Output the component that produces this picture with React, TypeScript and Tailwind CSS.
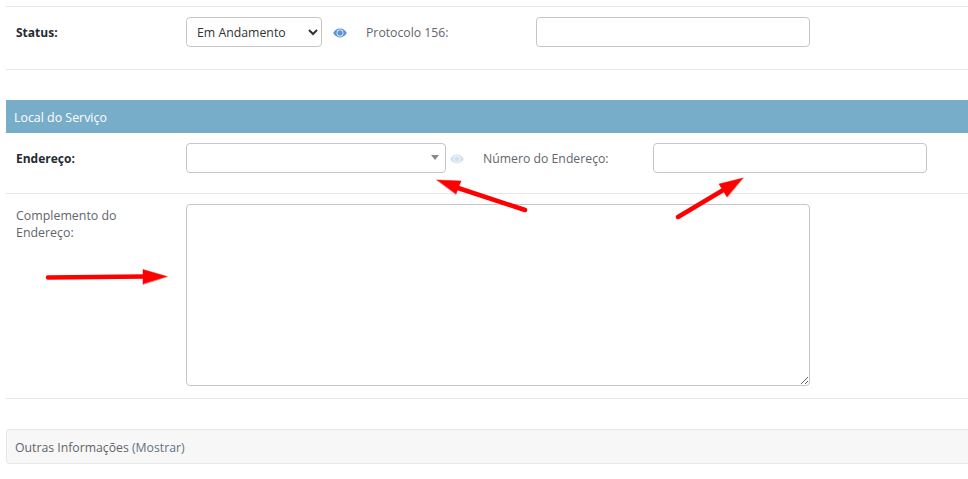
function Eye({ className }: { className: string }) {
  return (
    <svg viewBox="0 0 14 10" width="14" height="10" className={className}>
      <path fill="currentColor" fillRule="evenodd" d="M7 0.6C3.9 0.6 1.4 2.6 0.2 5c1.2 2.4 3.7 4.4 6.8 4.4s5.6-2 6.8-4.4C12.6 2.6 10.1 0.6 7 0.6zM7 1.6a3.4 3.4 0 1 1 0 6.8 3.4 3.4 0 0 1 0-6.8z" />
      <circle cx="7" cy="5" r="2.7" fill="currentColor" />
    </svg>
  );
}

function Arrows() {
  return (
    <svg className="absolute left-0 top-0 pointer-events-none" width="968" height="479" viewBox="0 0 968 479">
      <g fill="#ff0000" stroke="#ff0000" strokeLinecap="round">
        <line x1="525" y1="210" x2="455" y2="187" strokeWidth="4.5" />
        <polygon points="437,180 461,181 456,194" strokeWidth="0.5" />
        <line x1="678" y1="217" x2="725" y2="189" strokeWidth="4.5" />
        <polygon points="743,178 719,184 727,197" strokeWidth="0.5" />
        <line x1="48" y1="277.5" x2="145" y2="276.5" strokeWidth="4.5" />
        <polygon points="167,276.5 143,269.5 143,284" strokeWidth="0.5" />
      </g>
    </svg>
  );
}

export default function App() {
  return (
    <div className="relative w-[968px] h-[479px] overflow-hidden bg-white pl-[6px] pt-[6px] text-[12.25px] text-[#5f666c] font-['Open_Sans',sans-serif]">
      <div className="flex h-[64px] border-y border-[#e7e7e7] pt-[10px]">
        <div className="w-[180px] pl-[10px] pt-[7px] font-bold text-[12px] text-[#262b30] leading-[17px]">Status:</div>
        <div className="relative w-[136px] h-[30px]">
          <select className="w-full h-full rounded-[4px] border border-[#c6c6c6] bg-white pl-[6px] text-[12.3px] text-[#333] font-['Open_Sans',sans-serif]" defaultValue="Em Andamento">
            <option>Em Andamento</option>
          </select>
        </div>
        <Eye className="ml-[11px] mt-[11px] text-[#5b94d3]" />
        <div className="ml-[19px] w-[170px] pt-[7px] leading-[17px]">Protocolo 156:</div>
        <div className="w-[274px] h-[30px] rounded-[4px] border border-[#c6c6c6]" />
      </div>

      <div className="mt-[30px] h-[33px] bg-[#78adc9] pl-[8px] pt-[9px] leading-[17px] text-[12.4px] text-white">Local do Serviço</div>

      <div className="flex h-[60px] pt-[10px]">
        <div className="w-[180px] pl-[10px] pt-[7px] font-bold text-[12px] text-[#262b30] leading-[17px]">Endereço:</div>
        <div className="relative w-[260px] h-[30px] rounded-[4px] border border-[#c6c6c6] bg-white">
          <div className="absolute right-[6px] top-[11px] h-0 w-0 border-x-[4px] border-t-[5px] border-x-transparent border-t-[#888888]" />
        </div>
        <Eye className="ml-[4px] mt-[11px] text-[#cfe0f0]" />
        <div className="ml-[19px] w-[170px] pt-[7px] leading-[17px]">Número do Endereço:</div>
        <div className="w-[274px] h-[30px] rounded-[4px] border border-[#c6c6c6]" />
      </div>

      <div className="flex h-[206px] border-y border-[#e7e7e7] pt-[10px]">
        <div className="w-[180px] pl-[10px] pr-[40px] pt-[3px] leading-[17px] text-[12.4px]">Complemento do Endereço:</div>
        <textarea className="block w-[624px] h-[182px] rounded-[4px] border border-[#c6c6c6] bg-white" />
      </div>

      <div className="mt-[30px] h-[35px] rounded-l-[4px] border-y border-l border-[#e7e7e7] bg-[#f7f7f7] pl-[8px] pt-[9px] leading-[17px]">
        Outras Informações <span className="text-[#5f7382]">(Mostrar)</span>
      </div>

      <Arrows />
    </div>
  );
}
